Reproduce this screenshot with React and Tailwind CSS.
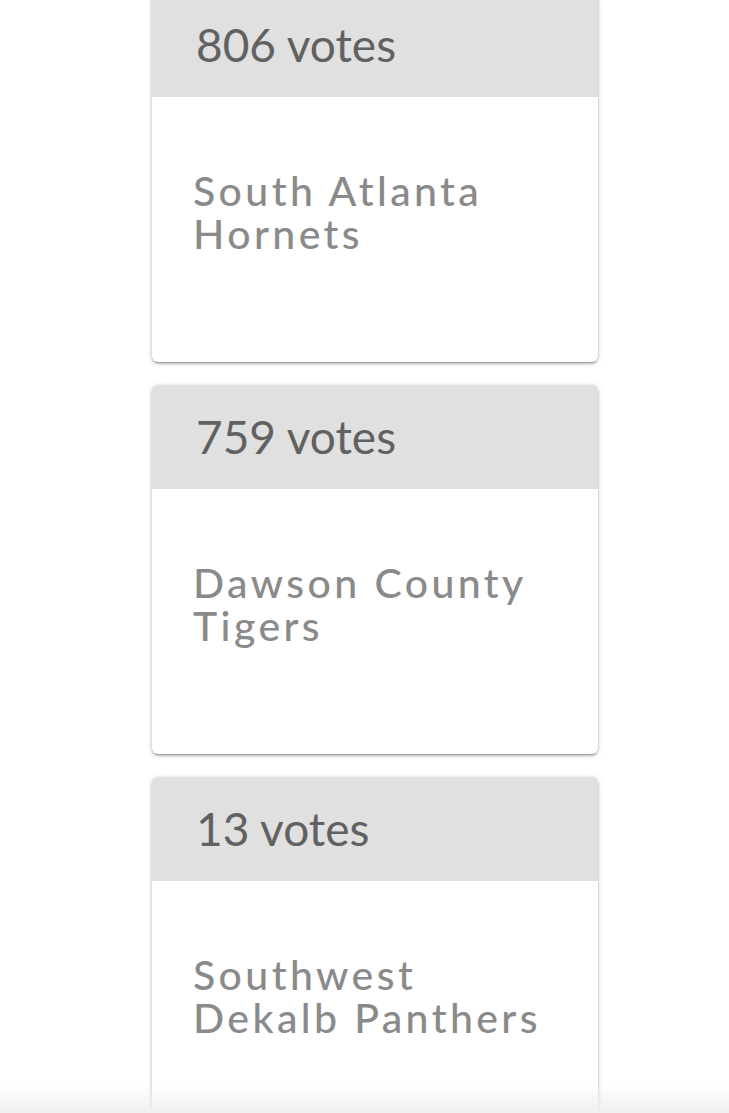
const teams = [
  { votes: 806, name: "South Atlanta Hornets" },
  { votes: 759, name: "Dawson County Tigers" },
  { votes: 13, name: "Southwest Dekalb Panthers" },
];

const TeamCard = ({ votes, name }) => (
  <div className="w-[446px] rounded-md overflow-hidden bg-white shadow-[0_2px_2px_rgba(0,0,0,0.16),0_3px_1px_-2px_rgba(0,0,0,0.14),0_1px_5px_rgba(0,0,0,0.22)]">
    <div className="h-[104px] bg-[#e0e0e0] flex items-center pl-[44px]">
      <span className="text-[46px] leading-none text-[#616161] font-['Lato',sans-serif]">
        {votes} votes
      </span>
    </div>
    <div className="h-[265px] pt-[72px] pl-[41px] pr-[45px]">
      <h2 className="text-[41px] leading-[43px] tracking-[3.4px] font-medium text-[#8a8a8a] font-['Lato',sans-serif]">
        {name}
      </h2>
    </div>
  </div>
);

const App = () => {
  return (
    <div className="min-h-screen bg-white overflow-hidden">
      <div className="-mt-[7px] pl-[152px] flex flex-col gap-[23px]">
        {teams.map((team) => (
          <TeamCard key={team.name} {...team} />
        ))}
      </div>
      <div className="fixed bottom-0 left-0 right-0 h-[28px] bg-gradient-to-t from-[#efefef] to-transparent pointer-events-none" />
    </div>
  );
};

export default App;
